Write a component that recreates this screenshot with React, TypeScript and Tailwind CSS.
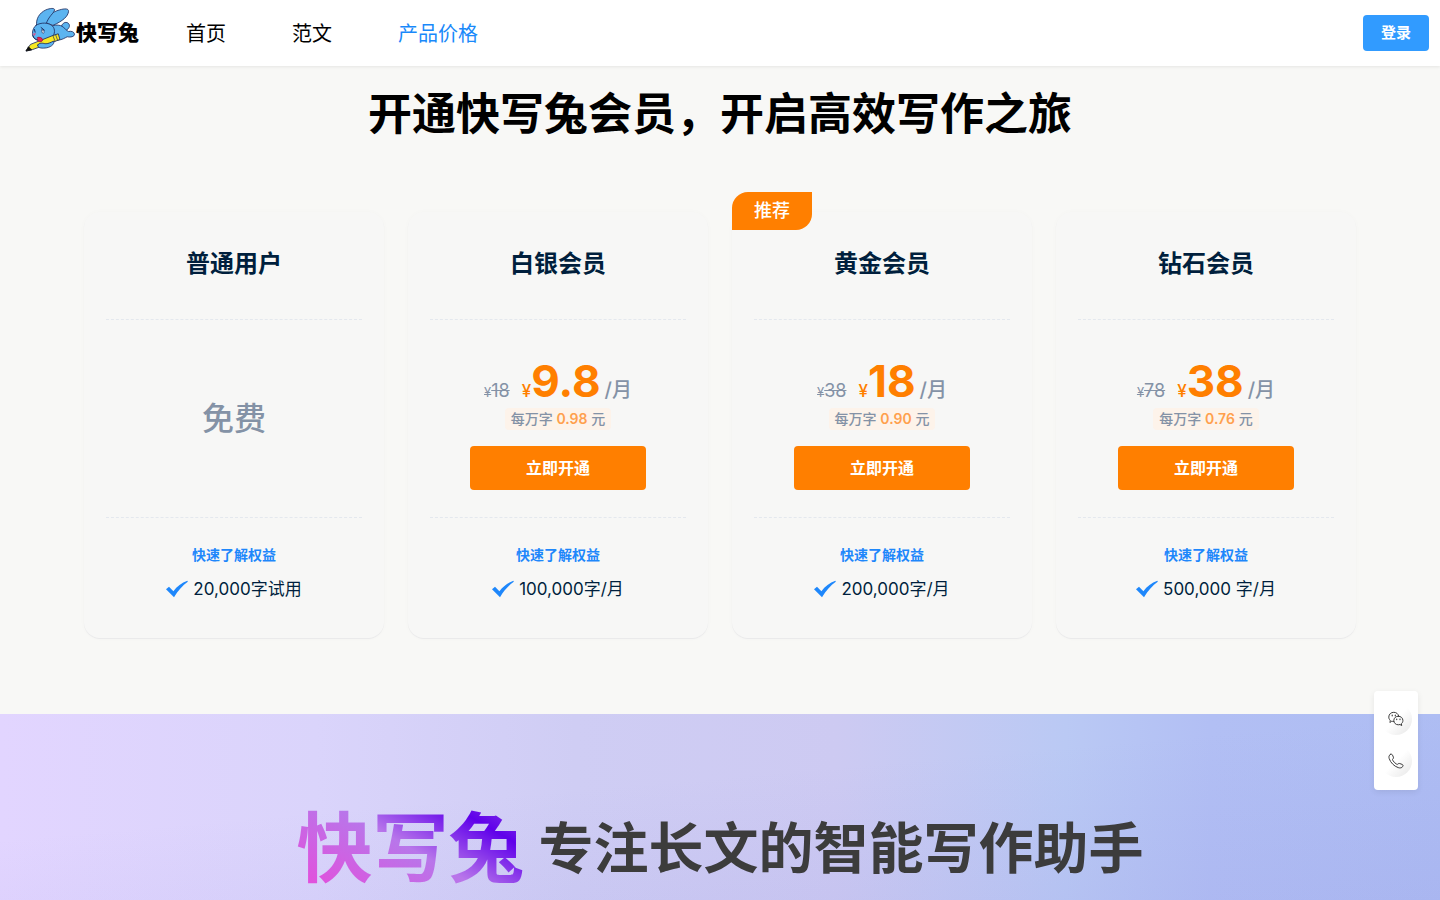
import type { ReactNode } from 'react'
import clsx from 'clsx'

interface Plan {
  name: string
  quota: string
  oldPrice?: string
  price?: string
  unitPrice?: string
  recommended?: boolean
}

const NAV_ITEMS = [
  { label: '首页', active: false },
  { label: '范文', active: false },
  { label: '产品价格', active: true },
]

const PLANS: Plan[] = [
  { name: '普通用户', quota: '20,000字试用' },
  { name: '白银会员', quota: '100,000字/月', oldPrice: '18', price: '9.8', unitPrice: '0.98' },
  {
    name: '黄金会员',
    quota: '200,000字/月',
    oldPrice: '38',
    price: '18',
    unitPrice: '0.90',
    recommended: true,
  },
  { name: '钻石会员', quota: '500,000 字/月', oldPrice: '78', price: '38', unitPrice: '0.76' },
]

function RabbitLogo() {
  return (
    <svg
      className="h-[45px] w-[52px]"
      viewBox="70 20 156 136"
      fill="#5cb4f0"
      stroke="#1c2a5e"
      strokeWidth="2.5"
      strokeLinejoin="round"
      strokeLinecap="round"
    >
      {/* 后脚和尾巴 */}
      <path d="M182 80c2-9 9-15 17-13 8 2 10 11 5 17-3 5-8 8-14 8z" />
      <path d="M146 82c12-8 26-10 38-4 8 5 13 13 20 16 9-2 17 1 18 8 0 8-12 10-22 8-8 4-15 9-27 10-20 2-37-16-27-38z" />
      {/* 耳朵 */}
      <path d="M134 66c6-18 20-31 42-37 17-5 29-5 28 5-2 14-16 28-46 41z" />
      <path d="M108 78c-4-22 8-40 27-49 14-6 26-6 27-1-2 12-18 18-26 44z" />
      {/* 头 */}
      <path d="M106 75c14-9 38-9 50 3 8 9 7 24-1 32-9 10-27 13-39 10-14-1-22-9-21-20 0-10 4-20 11-25z" />
      <path d="M97 107c2 9 8 14 18 14" fill="none" />
      <path d="M121 82l10 8" fill="none" strokeWidth="3" />
      <path d="M124 89c6-1 8 7 4 11-4-1-6-6-4-11z" fill="#fff" strokeWidth="2" />
      <path d="M101 88l2 8" strokeWidth="3" />
      <path d="M97 101l8-1-4 6z" fill="#f0437a" stroke="#f0437a" strokeWidth="1" />
      {/* 铅笔 */}
      <path d="M76 152l13-19 68-27 16-5 5 17-20 8-61 22z" fill="#f8e823" />
      <path d="M76 152l7-12 9 9z" fill="#111" stroke="#111" />
      <path d="M157 107l6 16M165 104l6 16" fill="none" strokeWidth="2" />
      <path d="M110 112c5-3 15 1 16 7 0 6-9 8-14 4z" fill="#e8244e" stroke="#8e1638" strokeWidth="2" />
      {/* 前爪 */}
      <path d="M111 135c4-8 15-6 22-4 9 1 17-4 26-8 4 10-11 20-26 21-11 1-24 0-22-9z" />
    </svg>
  )
}

function CheckIcon() {
  return (
    <svg className="h-[18px] w-[22px]" viewBox="0 0 22 18" fill="#1e87fb">
      <path d="M0 9.3 3 6.800 7.400 11.200C11 6.500 15.600 2.800 21.400 0.800L21.800 1.800C16.500 5.600 12 10.600 8 17.200Z" />
    </svg>
  )
}

function WechatIcon() {
  return (
    <svg
      className="size-4"
      viewBox="0 0 16 16"
      fill="none"
      stroke="#3c3c3c"
      strokeWidth="1"
      strokeLinejoin="round"
      strokeLinecap="round"
    >
      <path d="M5.800 10.400c-.8.100-1.500 0-2.200-.3l-1.500 1.500.1-2.400C1.100 8.300.8 7.200.8 6 .8 3.300 3 1.300 5.800 1.300c2.400 0 4.300 1.400 4.900 3.600" />
      <path d="M10.300 5.200c2.700 0 4.600 1.900 4.600 4.300 0 1.400-.6 2.500-1.500 3.200l.3 1.900-1.700-1.100c-.5.200-1.100.3-1.700.3-2.600 0-4.500-1.900-4.500-4.300s1.900-4.300 4.500-4.300z" />
      <path d="M4.200 4.200v.6M7.300 4.200v.6M8.700 8v.6M12 8v.6" strokeWidth="1.200" />
    </svg>
  )
}

function PhoneIcon() {
  return (
    <svg
      className="size-4"
      viewBox="0 0 16 16"
      fill="none"
      stroke="#3c3c3c"
      strokeWidth="1"
      strokeLinejoin="round"
      strokeLinecap="round"
    >
      <path d="M2.200 1.500c1-.7 1.900-.3 2.300.6l.9 2.100c.3.700 0 1.200-.5 1.700-.5.400-.5.800-.2 1.300.9 1.700 2.300 3.100 4 4 .5.300.9.200 1.300-.2.500-.6 1.100-.7 1.700-.5l2.400.9c1 .4 1.200 1.300.6 2.200-1 1.400-2.700 1.600-4.500 1C6.200 13.300 2.500 9.600 1.200 5.600.700 4 .8 2.500 2.200 1.500z" />
    </svg>
  )
}

function Header() {
  return (
    <header className="sticky top-0 z-20 flex h-[66px] items-center justify-between bg-white pr-[11px] pl-6 shadow-[0_1px_3px_rgba(0,0,0,0.08)]">
      <div className="flex items-center">
        <a href="#" className="flex w-[162px] items-center pb-2">
          <RabbitLogo />
          <span className="pt-2 text-[21px] leading-6 font-black text-black">快写兔</span>
        </a>
        <nav className="flex gap-[66px] pt-0.5 text-[20px] leading-7">
          {NAV_ITEMS.map((item) => (
            <a
              key={item.label}
              href="#"
              className={clsx(item.active ? 'text-[#1989fa]' : 'text-black')}
            >
              {item.label}
            </a>
          ))}
        </nav>
      </div>
      <button className="h-9 w-[66px] rounded bg-[#319bff] text-[15px] font-bold text-white">
        登录
      </button>
    </header>
  )
}

function PlanPrice({ plan }: { plan: Plan }) {
  if (!plan.price) {
    return (
      <p className="flex h-full items-center justify-center text-[32px] leading-10 font-medium text-[#8492a6]">
        免费
      </p>
    )
  }

  return (
    <div className="flex h-full flex-col items-center pt-9">
      <p className="flex h-[52px] items-baseline leading-[50px] text-[#8492a6]">
        <del className="text-[18px]">
          <span className="text-[13px]">¥</span>
          {plan.oldPrice}
        </del>
        <span className="ml-3 text-[17px] font-medium text-[#ff7f00]">¥</span>
        <strong className="text-[44px] font-bold text-[#ff7f00]">{plan.price}</strong>
        <span className="ml-1 text-[20px] font-medium">/月</span>
      </p>
      <p className="rounded-sm bg-[#fdf3ea] px-[6px] text-[14px] leading-[22px] font-medium text-[#8492a6]">
        每万字 <span className="font-semibold text-[#ffa04d]">{plan.unitPrice}</span> 元
      </p>
      <button className="mt-4 h-11 w-44 rounded bg-[#ff7f00] text-[16px] font-bold text-white">
        立即开通
      </button>
    </div>
  )
}

function PlanCard({ plan }: { plan: Plan }) {
  return (
    <article className="relative rounded-2xl bg-[#f7f7f6] px-[22px] pb-[35px] shadow-[0_0_6px_rgba(0,0,0,0.02),0_1px_1px_rgba(40,40,80,0.06)]">
      {plan.recommended && (
        <span className="absolute -top-5 left-0 rounded-tl-2xl rounded-br-2xl bg-[#ff7f00] px-[22px] text-[18px] leading-[38px] font-medium text-white">
          推荐
        </span>
      )}
      <h2 className="border-b border-dashed border-[#e4e8ee] pt-9 pb-[39px] text-center text-[24px] leading-8 font-bold text-[#001f3d]">
        {plan.name}
      </h2>
      <div className="h-[198px] border-b border-dashed border-[#e4e8ee]">
        <PlanPrice plan={plan} />
      </div>
      <div className="flex flex-col items-center pt-[25px]">
        <a href="#" className="text-[14px] leading-6 font-bold text-[#1e87fb]">
          快速了解权益
        </a>
        <p className="mt-2 flex items-center gap-[5px] text-[17px] leading-7 text-[#001f3d]">
          <CheckIcon />
          {plan.quota}
        </p>
      </div>
    </article>
  )
}

function ContactButton({ label, children }: { label: string; children: ReactNode }) {
  return (
    <button
      aria-label={label}
      className="flex size-8 items-center justify-center rounded-full bg-linear-to-br from-white from-50% to-[#e6e6e6]"
    >
      {children}
    </button>
  )
}

export default function App() {
  return (
    <div className="flex min-h-screen flex-col bg-[#f8f8f6] font-[Inter,'Noto_Sans_CJK_SC',sans-serif]">
      <Header />

      <main className="flex flex-1 flex-col">
        <section className="px-6 pt-[18px] pb-[76px]">
          <h1 className="text-center text-[44px] leading-[60px] font-bold text-black">
            开通快写兔会员，开启高效写作之旅
          </h1>
          <div className="mx-auto mt-[68px] grid max-w-[1272px] grid-cols-4 gap-6">
            {PLANS.map((plan) => (
              <PlanCard key={plan.name} plan={plan} />
            ))}
          </div>
        </section>

        <section className="flex-1 bg-[linear-gradient(175deg,transparent_40%,rgba(140,140,225,0.14)),linear-gradient(to_right,#e2d5ff,#dad4fb_22%,#cfcdf4_40%,#cdcaf2_58%,#bac9f4_74%,#b2bff4_84%,#aebdf3)]">
          <h2 className="flex items-center justify-center gap-[14px] pt-[82px] leading-[104px] font-bold">
            <span className="bg-[linear-gradient(30deg,#e250dc_10%,#b876ea_50%,#5f00ea_78%,#9550e8)] bg-clip-text text-[76px] text-transparent">
              快写兔
            </span>
            <span className="text-[55px] text-[#3c3c3c]">专注长文的智能写作助手</span>
          </h2>
        </section>
      </main>

      <aside className="fixed right-[22px] bottom-[110px] z-10 flex w-11 flex-col items-center gap-[10px] rounded bg-white pt-3 pb-[13px] shadow-[0_2px_6px_rgba(0,0,0,0.08)]">
        <ContactButton label="微信">
          <WechatIcon />
        </ContactButton>
        <ContactButton label="电话">
          <PhoneIcon />
        </ContactButton>
      </aside>
    </div>
  )
}
